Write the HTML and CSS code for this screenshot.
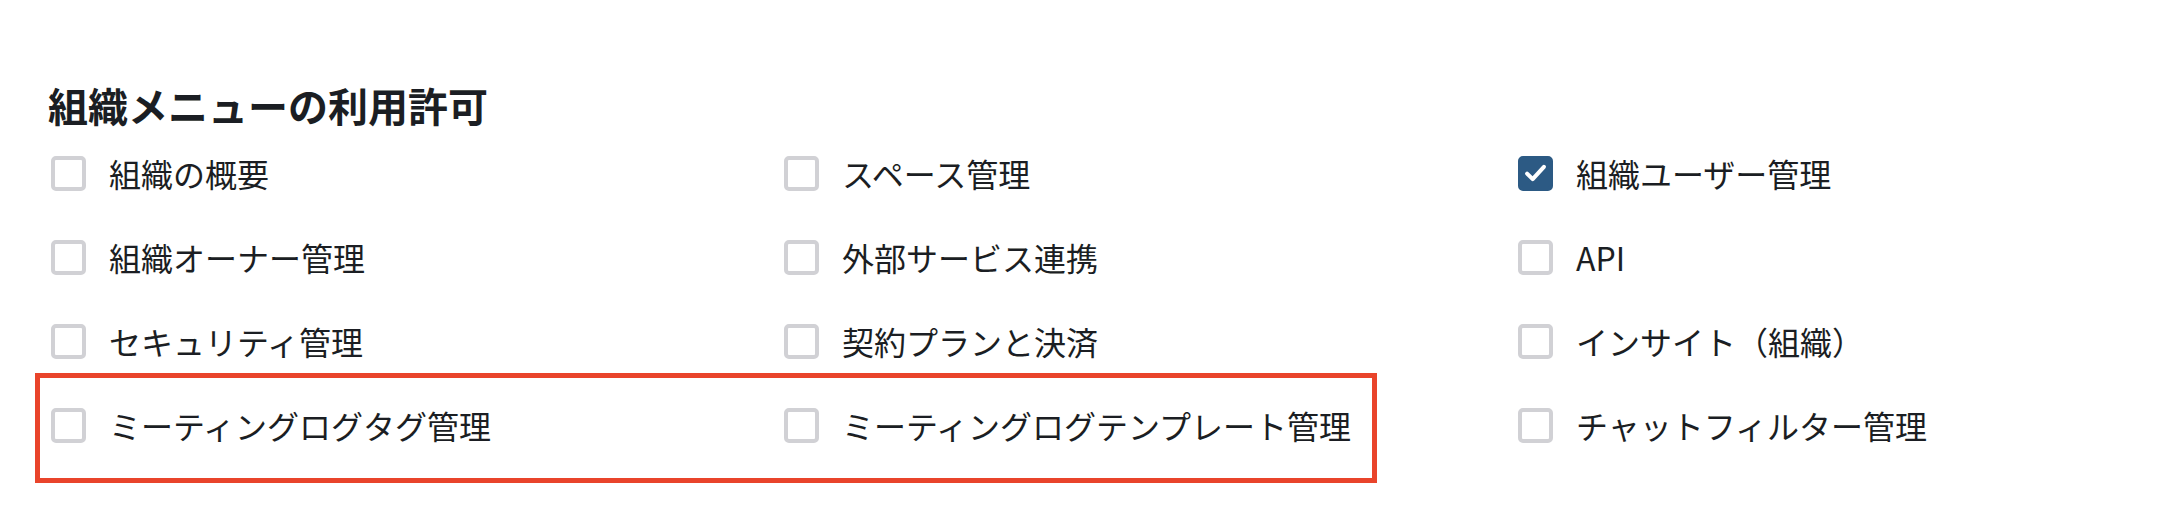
FILE: index.html
```html
<!DOCTYPE html>
<html>
<head>
  <title>組織メニューの利用許可</title>
  <link rel="stylesheet" href="styles.css">
</head>
<body>
  <div class="section">
    <h2>組織メニューの利用許可</h2>

    <div class="menu-grid">
      <label class="item"><span class="box"></span>組織の概要</label>
      <label class="item"><span class="box"></span>スペース管理</label>
      <label class="item"><span class="box checked"><svg viewBox="0 0 24 24"><path d="M4.5 12.5l5 5L19.5 6.5"/></svg></span>組織ユーザー管理</label>

      <label class="item"><span class="box"></span>組織オーナー管理</label>
      <label class="item"><span class="box"></span>外部サービス連携</label>
      <label class="item"><span class="box"></span>API</label>

      <label class="item"><span class="box"></span>セキュリティ管理</label>
      <label class="item"><span class="box"></span>契約プランと決済</label>
      <label class="item"><span class="box"></span>インサイト（組織）</label>

      <label class="item"><span class="box"></span>ミーティングログタグ管理</label>
      <label class="item"><span class="box"></span>ミーティングログテンプレート管理</label>
      <label class="item"><span class="box"></span>チャットフィルター管理</label>
    </div>

    <div class="highlight"></div>
  </div>
</body>
</html>
```

FILE: styles.css
```css
body {
  margin: 0;
  padding: 0;
  background: #fff;
  color: #1b1e23;
  font-family: "Noto Sans CJK JP", "Noto Sans", sans-serif;
}

.section {
  position: relative;
  padding: 81px 0 60px 48px;
}

h2 {
  margin: 0 0 2px;
  font-size: 40px;
  line-height: 48px;
  font-weight: 700;
}

.menu-grid {
  display: grid;
  grid-template-columns: 733px 734px 1fr;
  grid-auto-rows: 84px;
}

.item {
  display: flex;
  align-items: center;
  gap: 23px;
  font-size: 32px;
}

.box {
  width: 35px;
  height: 35px;
  margin-left: 3px;
  box-sizing: border-box;
  border: 4px solid #d1d1d5;
  border-radius: 5px;
  flex-shrink: 0;
  display: flex;
  align-items: center;
  justify-content: center;
}

.box.checked {
  background: #2c5a84;
  border-color: #2c5a84;
}

.box svg {
  width: 30px;
  height: 30px;
  fill: none;
  stroke: #fff;
  stroke-width: 3.6;
  stroke-linecap: round;
  stroke-linejoin: round;
}

.highlight {
  position: absolute;
  left: 35px;
  top: 373px;
  width: 1342px;
  height: 110px;
  box-sizing: border-box;
  border: 5px solid #e9442b;
}
```
